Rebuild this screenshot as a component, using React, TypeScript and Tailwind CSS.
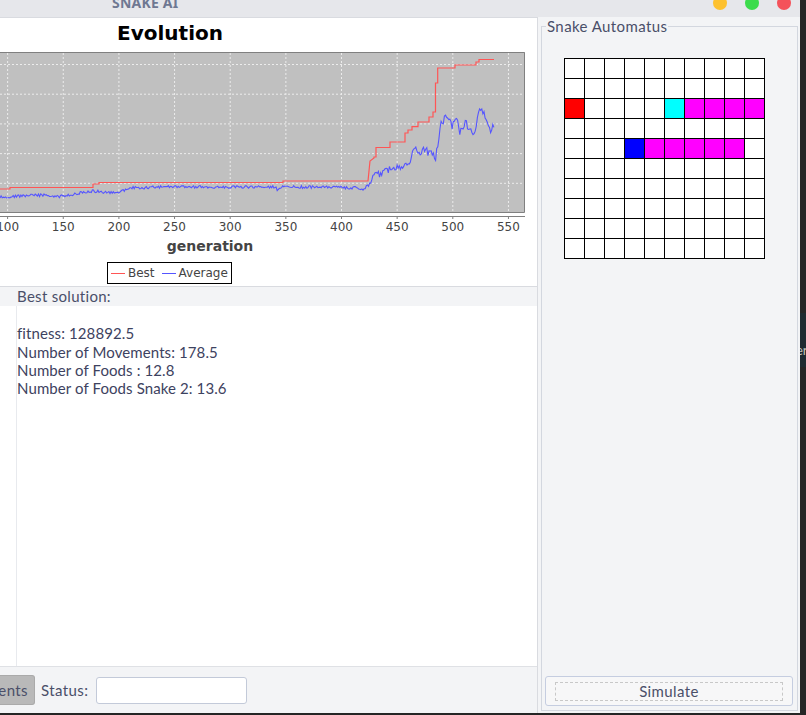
import React from 'react';

const ui = "font-['Lato','Noto_Sans',sans-serif]";
const dv = "font-['DejaVu_Sans',sans-serif]";

// x position of a generation on the domain axis
const gx = (g: number) => 7.6 + (g - 100) * 1.113;

const hGrid = [64, 93.7, 123.4, 153.1, 182.8];
const ticks = [100, 150, 200, 250, 300, 350, 400, 450, 500, 550];

const redPath =
  'M0,189 H10 V187.5 H93 V184 H99 V182.5 H283 V181 H368 L370,161 L374,158 V157 H376 V147.5 H390 V142 H405 V133 H408 V130 H412 V126.7 H418 V122 H429 V117 H433 V112 H435.5 V83 H437.7 V68 H455 V65 H476 V62 H479 V59.5 H494';

const blueKeys: [number, number][] = [
  [0, 197], [20, 196], [45, 195], [55, 197], [70, 195], [90, 191], [117, 193], [131, 188],
  [165, 187], [276, 187], [278, 191], [282, 187], [330, 187], [358, 188], [362, 190],
  [368, 185], [372, 178], [386, 170], [400, 166], [410, 160], [415, 147], [420, 155],
  [424, 150], [430, 153], [436, 157], [438, 143], [441, 123], [448, 115], [452, 126],
  [457, 120], [460, 132], [465, 123], [470, 128], [474, 138], [479, 108], [484, 112],
  [488, 125], [491, 130], [495, 125],
];

function interp(x: number) {
  for (let i = 1; i < blueKeys.length; i++) {
    const [x1, y1] = blueKeys[i];
    const [x0, y0] = blueKeys[i - 1];
    if (x <= x1) return y0 + ((x - x0) / (x1 - x0)) * (y1 - y0);
  }
  return blueKeys[blueKeys.length - 1][1];
}

function rnd(i: number) {
  const s = Math.sin(i * 127.1 + 311.7) * 43758.5453;
  return s - Math.floor(s);
}

const bluePoints = (() => {
  const pts: string[] = [];
  let i = 0;
  for (let x = 0; x <= 495; x += 1.1, i++) {
    const amp = x < 368 ? 1.4 : 3.8;
    const y = interp(x) + (rnd(i) - 0.5) * 2 * amp;
    pts.push(`${x.toFixed(1)},${y.toFixed(1)}`);
  }
  return pts.join(' ');
})();

function Chart() {
  return (
    <svg width={537} height={184} className="block">
      <g transform="translate(0,-52)">
        <rect x={0} y={52} width={525} height={160} fill="#c0c0c0" />
        {hGrid.map((y) => (
          <line key={y} x1={0} x2={524} y1={y + 0.5} y2={y + 0.5} stroke="#ececec" strokeDasharray="2 2" />
        ))}
        {ticks.map((t) => (
          <line key={t} x1={gx(t)} x2={gx(t)} y1={53} y2={212} stroke="#ececec" strokeDasharray="2 2" />
        ))}
        <path d={redPath} fill="none" stroke="#ff5555" strokeWidth={1.2} />
        <polyline points={bluePoints} fill="none" stroke="#5555ff" strokeWidth={1.1} />
        <path d="M0,52.5 H524.5 V212.5 H0" fill="none" stroke="#808080" />
        <line x1={0} x2={525} y1={216.5} y2={216.5} stroke="#808080" />
        {ticks.map((t) => (
          <g key={t}>
            <line x1={gx(t)} x2={gx(t)} y1={216} y2={219} stroke="#808080" />
            <text x={gx(t)} y={231} textAnchor="middle" fontSize={12} fill="#444" fontFamily="DejaVu Sans, sans-serif">
              {t}
            </text>
          </g>
        ))}
      </g>
    </svg>
  );
}

function Cell({ c }: { c: string }) {
  const bg =
    c === 'r' ? 'bg-[#ff0000]' : c === 'c' ? 'bg-[#00ffff]' : c === 'm' ? 'bg-[#ff00ff]' : c === 'b' ? 'bg-[#0000ff]' : 'bg-white';
  return <div className={`w-[19px] h-[19px] ${bg}`} />;
}

const board = [
  '..........',
  '..........',
  'r....cmmmm',
  '..........',
  '...bmmmmm.',
  '..........',
  '..........',
  '..........',
  '..........',
  '..........',
];

export default function App() {
  return (
    <div className={`w-[806px] h-[715px] bg-[#252525] overflow-hidden flex ${ui}`}>
      <div className="w-[800px] h-[713px] flex flex-col">
        {/* title bar */}
        <div className="h-[17px] bg-[#e6e7eb] flex items-start overflow-hidden">
          <span className="ml-[112px] -mt-[6px] text-[14px] font-bold leading-[17px] text-[#6f7892] tracking-[0.2px] font-['Noto_Sans',sans-serif]">
            SNAKE AI
          </span>
          <div className="ml-auto mr-[9px] -mt-[4px] flex gap-[18px]">
            <div className="w-[14px] h-[14px] rounded-full bg-[#fdc12f]" />
            <div className="w-[14px] h-[14px] rounded-full bg-[#3cdc4c]" />
            <div className="w-[14px] h-[14px] rounded-full bg-[#f4525a]" />
          </div>
        </div>

        <div className="flex flex-1 min-h-0">
          {/* left column */}
          <div className="w-[538px] flex flex-col border-r border-[#d9dbe0]">
            <div className="h-[270px] bg-white border-y border-[#d9dbe0] flex flex-col">
              <div className={`h-[34px] pt-[1px] w-[340px] text-center text-[20px] leading-[28px] font-bold text-black ${dv}`}>
                Evolution
              </div>
              <Chart />
              <div className={`h-[20px] w-[420px] text-center text-[14px] leading-[20px] font-bold text-[#444] ${dv}`}>
                generation
              </div>
              <div className={`mt-[6px] ml-[107px] w-[125px] h-[22px] border border-black flex items-center text-[12px] text-[#444] ${dv}`}>
                <span className="ml-[3px] w-[14px] h-px bg-[#ff5555]" />
                <span className="ml-[3px]">Best</span>
                <span className="ml-[7px] w-[14px] h-px bg-[#5555ff]" />
                <span className="ml-[3px]">Average</span>
              </div>
            </div>
            <div className="h-[19px] bg-[#f3f4f6] pl-[17px] text-[15px] leading-[19px] tracking-[0.3px] text-[#4a4f69]">
              Best solution:
            </div>
            <div className="flex-1 bg-white">
              <div className="ml-[16px] h-full border-l border-[#e8eaee] text-[15px] leading-[18.3px] tracking-[0.1px] text-[#3d4260] whitespace-pre-line">
                {'\nfitness: 128892.5\nNumber of Movements: 178.5\nNumber of Foods : 12.8\nNumber of Foods Snake 2: 13.6'}
              </div>
            </div>
            <div className="h-[47px] border-t border-[#dfe1e5] bg-[#f3f4f6] flex items-center text-[15px] tracking-[0.4px] text-[#4a4f69]">
              <div className="w-[35px] h-[30px] bg-[#b9b9b9] border border-[#aaaaaa] border-l-0 rounded-r-[3px] flex items-center justify-end pr-[6px]">
                ents
              </div>
              <span className="ml-[6px]">Status:</span>
              <div className="ml-[8px] w-[151px] h-[27px] bg-white border border-[#c3cad9] rounded-[3px]" />
            </div>
          </div>

          {/* right panel */}
          <div className="w-[262px] bg-[#f3f4f6] pl-[3px] pr-[2px] pb-[2px]">
            <fieldset className="h-full border border-[#d3d7df] flex flex-col">
              <legend className="ml-[4px] px-px text-[15px] leading-[18px] tracking-[0.4px] text-[#4a4f69]">Snake Automatus</legend>
              <div className="mt-[23px] ml-[22px] w-[201px] grid grid-cols-10 gap-px bg-black p-px">
                {board.map((row, r) => row.split('').map((c, i) => <Cell key={`${r}-${i}`} c={c} />))}
              </div>
              <div className="mt-auto ml-[3px] mr-[4px] mb-[4px] h-[30px] bg-[#f7f7f8] border border-[#c5cde0] rounded-[3px] p-[5px_9px_4px_9px]">
                <div className="h-full border border-dashed border-[#c8c8c8] flex items-center justify-center text-[15px] tracking-[0.4px] text-[#4a4f69]">
                  Simulate
                </div>
              </div>
            </fieldset>
          </div>
        </div>
      </div>
      {/* window behind */}
      <div className="w-[6px] h-full flex flex-col bg-[#262626]">
        <div className="h-[313px]" />
        <div className="h-[54px] bg-[#1f2b31] overflow-hidden pt-[24px]">
          <span className="-ml-[4px] text-[13px] text-[#c9c2ba]">er</span>
        </div>
      </div>
    </div>
  );
}
